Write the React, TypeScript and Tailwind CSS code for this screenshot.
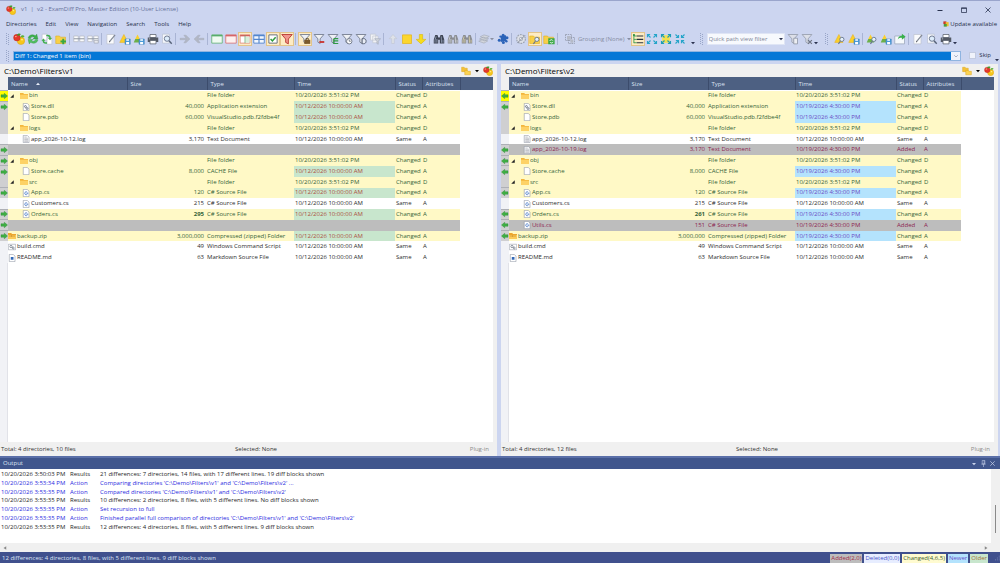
import React from 'react';
import clsx from 'clsx';

type Side = 'left' | 'right';
type Kind = 'changed' | 'same' | 'added' | 'missing';
type IconName = 'folder' | 'dll' | 'file' | 'text' | 'cs' | 'zip' | 'cmd' | 'md';

interface Entry {
  name: string;
  icon: IconName;
  depth: number;
  size: string;
  type: string;
  time: string;
  kind: Kind;
  mark?: boolean;
  current?: boolean;
  stale?: boolean;
  bold?: boolean;
}

const FOLDER_TIME = '10/20/2026 3:51:02 PM';
const OLD_TIME = '10/12/2026 10:00:00 AM';
const NEW_TIME = '10/19/2026 4:30:00 PM';

const missing: Entry = { name: '', icon: 'file', depth: 0, size: '', type: '', time: '', kind: 'missing', mark: true };

const folder = (name: string, mark = false, current = false): Entry => ({
  name, icon: 'folder', depth: 1, size: '', type: 'File folder', time: FOLDER_TIME, kind: 'changed', mark, current,
});

function buildEntries(side: Side): Entry[] {
  const left = side === 'left';
  const time = left ? OLD_TIME : NEW_TIME;
  return [
    folder('bin', true, true),
    { name: 'Store.dll', icon: 'dll', depth: 2, size: '40,000', type: 'Application extension', time, kind: 'changed', stale: true, mark: true },
    { name: 'Store.pdb', icon: 'file', depth: 2, size: '60,000', type: 'VisualStudio.pdb.f2fdbe4f', time, kind: 'changed', stale: true },
    folder('logs'),
    { name: 'app_2026-10-12.log', icon: 'text', depth: 2, size: '3,170', type: 'Text Document', time: OLD_TIME, kind: 'same' },
    left
      ? missing
      : { name: 'app_2026-10-19.log', icon: 'text', depth: 2, size: '3,170', type: 'Text Document', time: NEW_TIME, kind: 'added', mark: true },
    folder('obj', true),
    { name: 'Store.cache', icon: 'file', depth: 2, size: '8,000', type: 'CACHE File', time, kind: 'changed', stale: true, mark: true },
    folder('src'),
    { name: 'App.cs', icon: 'cs', depth: 2, size: '120', type: 'C# Source File', time, kind: 'changed', stale: true, mark: true },
    { name: 'Customers.cs', icon: 'cs', depth: 2, size: '215', type: 'C# Source File', time: OLD_TIME, kind: 'same' },
    { name: 'Orders.cs', icon: 'cs', depth: 2, size: left ? '295' : '261', type: 'C# Source File', time, kind: 'changed', stale: true, mark: true, bold: true },
    left
      ? missing
      : { name: 'Utils.cs', icon: 'cs', depth: 2, size: '151', type: 'C# Source File', time: NEW_TIME, kind: 'added', mark: true },
    { name: 'backup.zip', icon: 'zip', depth: 0, size: '3,000,000', type: 'Compressed (zipped) Folder', time, kind: 'changed', stale: true, mark: true },
    { name: 'build.cmd', icon: 'cmd', depth: 0, size: '49', type: 'Windows Command Script', time: OLD_TIME, kind: 'same' },
    { name: 'README.md', icon: 'md', depth: 0, size: '63', type: 'Markdown Source File', time: OLD_TIME, kind: 'same' },
  ];
}

const log = [
  { time: '10/20/2026 3:50:03 PM', kind: 'Results', text: '21 differences: 7 directories, 14 files, with 17 different lines. 19 diff blocks shown' },
  { time: '10/20/2026 3:53:34 PM', kind: 'Action', text: "Comparing directories 'C:\\Demo\\Filters\\v1' and 'C:\\Demo\\Filters\\v2' ..." },
  { time: '10/20/2026 3:53:35 PM', kind: 'Action', text: "Compared directories 'C:\\Demo\\Filters\\v1' and 'C:\\Demo\\Filters\\v2'" },
  { time: '10/20/2026 3:53:35 PM', kind: 'Results', text: '10 differences: 2 directories, 8 files, with 5 different lines. No diff blocks shown' },
  { time: '10/20/2026 3:53:35 PM', kind: 'Action', text: 'Set recursion to full' },
  { time: '10/20/2026 3:53:35 PM', kind: 'Action', text: "Finished parallel full comparison of directories 'C:\\Demo\\Filters\\v1' and 'C:\\Demo\\Filters\\v2'" },
  { time: '10/20/2026 3:53:35 PM', kind: 'Results', text: '12 differences: 4 directories, 8 files, with 5 different lines. 9 diff blocks shown' },
];

/* ---------- drawings ---------- */

function Svg({ children, className = 'h-3 w-3' }: { children: React.ReactNode; className?: string }) {
  return (
    <svg viewBox="0 0 16 16" fill="none" className={clsx('block shrink-0', className)} aria-hidden="true">
      {children}
    </svg>
  );
}

const logo = (
  <>
    <circle cx="10.600" cy="10.400" r="5" fill="#f6c71c" stroke="#dc9d0e" strokeWidth=".6" />
    <circle cx="5.200" cy="6.200" r="4.400" fill="#e5382a" stroke="#bb2817" strokeWidth=".6" />
    <path d="M5 3C6 .6 9 .2 10.400 1.400 9.400 3.600 7 4.200 5 3Z" fill="#3f9a2c" />
    <path d="M10 5c1.500-2.500 4-2.600 5.400-.6-1.400 2-3.800 2.200-5.400.6Z" fill="#59b336" />
    <ellipse cx="3.800" cy="4.800" rx="1.300" ry=".9" fill="#ffa999" />
    <ellipse cx="12" cy="9" rx="1.300" ry=".9" fill="#ffeb98" />
  </>
);

const triangle = <path d="M6.500 2 12 12.500H1Z" fill="#fbd02c" stroke="#e8b422" strokeWidth=".8" />;
const cone = (
  <>
    <path d="M6 2 9 8 3 8Z" fill="#fbd02c" />
    <path d="M3 8h6l2 4.500H1Z" fill="#6cb04a" />
  </>
);
const lens = (
  <>
    <circle cx="10.500" cy="8.500" r="2.800" fill="#e4f1fb" stroke="#68768f" strokeWidth="1.200" />
    <path d="m8.500 11-2.600 3.400" stroke="#68768f" strokeWidth="1.600" />
  </>
);
const disk = (
  <>
    <path d="M8 8h7v7H8Z" fill="#4b9bd8" stroke="#3a7cb8" strokeWidth=".7" />
    <path d="M9.700 8.300h3.600v2H9.700ZM9.500 12h4v3h-4Z" fill="#fff" />
  </>
);
const funnel = <path d="M1.500 2h13L9.500 7.800V14l-3-1.800V7.800Z" fill="#eef0f4" stroke="#6c7587" strokeWidth="1.100" />;
const grayFunnel = <path d="M1.500 2h13L9.500 7.800V14l-3-1.800V7.800Z" fill="#dcdfe8" stroke="#949bab" strokeWidth="1.100" />;
const yellowFolder = <path d="M1 4h5l1.300 1.600H14V14H1Z" fill="#f8d047" stroke="#deae25" strokeWidth=".8" />;
const printer = (
  <>
    <path d="M4 2h8v4H4Z" fill="#fff" stroke="#5a606c" />
    <path d="M1 6h14v6H1Z" fill="#535964" />
    <path d="M4 10h8v4.500H4Z" fill="#fff" stroke="#5a606c" />
    <path d="M2.500 7.800h1.700" stroke="#cfd4df" />
  </>
);
const preview = (
  <>
    <path d="M2 1.500h9v12H2Z" fill="#f5f7fb" stroke="#b5bccd" strokeWidth=".8" />
    <circle cx="8" cy="7.500" r="3.600" fill="#dcecfb" stroke="#66728a" strokeWidth="1.200" />
    <path d="m10.700 10.300 3.600 4" stroke="#566278" strokeWidth="1.900" />
  </>
);
const edit = (
  <>
    <path d="M2.500 2h9.500v12.500H2.500Z" fill="#fafbfd" stroke="#bcc1cc" strokeWidth=".9" />
    <path d="m6 11.500 7.500-9" stroke="#7f8693" strokeWidth="1.500" />
    <path d="m5.500 12.500.4-1.800 1.200 1Z" fill="#333" />
  </>
);
const binoc = (dark: string, light: string) => (
  <>
    <path d="M3 2.500h3l1 3v8.500H1V9ZM10 2.500h3l2 6.500v5H9V5.500Z" fill={dark} />
    <path d="M6.500 6h3v3h-3Z" fill={dark} />
    <path d="M4.200 4.500 2.700 9.500v3.500M11 4.500l.4 8.500M5.200 8v5M13.400 9v4" stroke={light} strokeWidth=".9" />
  </>
);
const expandArrows = (color: string) => (
  <g stroke={color} strokeWidth="1.500">
    <path d="M6 6 2 2m0 3.500V2h3.500M10 6l4-4m-3.500 0H14v3.500M6 10l-4 4m0-3.500V14h3.500M10 10l4 4m-3.500 0H14v-3.500" />
  </g>
);
const gridWindow = (edge: string, fill: string) => (
  <>
    <path d="M1 2.500h14v11H1Z" fill={fill} stroke={edge} />
    <path d="M1 3.500h14" stroke={edge} strokeWidth="2" />
  </>
);
const splitRows = (
  <>
    <path d="M1 4h6v7.500H1ZM9 4h6v7.500H9Z" fill="#fbfcfd" stroke="#b0b5be" strokeWidth=".9" />
    <path d="M1 7.700h14" stroke="#8d939f" strokeWidth="1.300" />
  </>
);

const glyphs: Record<string, React.ReactNode> = {
  logo,
  refresh: (
    <>
      <path d="M1.500 7c.5-4 5.500-6 9.500-3.400L13 1.500l1.500 6.500H8l2-2C8 4.500 5 5 4.500 7.500Z" fill="#3db04b" stroke="#278f37" strokeWidth=".5" />
      <path d="M14.500 9c-.5 4-5.500 6-9.500 3.400L3 14.500 1.500 8.500H8L6 10.500c2 1.300 5 .6 5.500-1.800Z" fill="#52c160" stroke="#278f37" strokeWidth=".5" />
    </>
  ),
  swapDocs: (
    <>
      <path d="M1.500 1.500H8v8H1.500ZM8 6h6.500v9H8Z" fill="#fff" stroke="#b4bac8" strokeWidth=".8" />
      <path d="M7 2.500c4-.8 6 1 6 4h1.800L12 9.500 9.200 6.500H11C11 4.800 9.500 4 7 4.300ZM8 14.200c-4 .5-5.800-1-5.800-4H.6l2.600-3 2.700 3H4.200c0 1.700 1.300 2.300 3.800 2Z" fill="#3fae4c" />
    </>
  ),
  folderPlus: (
    <>
      {yellowFolder}
      <path d="M11 7.500v7.500M7.300 11.200h7.400" stroke="#38a744" strokeWidth="2.600" />
    </>
  ),
  nextDiff: splitRows,
  prevDiff: (
    <>
      {splitRows}
      <path d="M9.500 10h5.500v3.500H9.500Z" fill="#e8eaee" stroke="#9aa0ab" strokeWidth=".8" />
    </>
  ),
  edit,
  saveDiff: <>{triangle}{disk}</>,
  saveCone: <>{cone}{disk}</>,
  print: printer,
  preview,
  right: <path d="M1.500 7h8L6.500 3h2.800L14.500 8l-5.200 5H6.500l3-4h-8Z" fill="#b3b8c6" stroke="#a1a7b6" strokeWidth=".6" />,
  left: <path d="M14.500 7h-8l3-4H6.700L1.500 8l5.200 5h2.800l-3-4h8Z" fill="#b3b8c6" stroke="#a1a7b6" strokeWidth=".6" />,
  winGreen: gridWindow('#57ad6b', '#f0fbf2'),
  winRed: gridWindow('#d66568', '#fdf0ef'),
  winSplit: (
    <>
      <path d="M1.500 2.500h13v11h-13Z" fill="#fff" stroke="#d97a72" />
      <path d="M1.500 3.500h13" stroke="#d3625b" strokeWidth="2" />
      <path d="M8.500 5h5.500v8H8.500Z" fill="#d7efda" />
      <path d="M8 3v10.500" stroke="#67a873" />
    </>
  ),
  winBlue: (
    <>
      <path d="M1 2.500h14v11H1Z" fill="#f2f7ff" stroke="#5386cd" strokeWidth="1.200" />
      <path d="M1 3.500h14M8 3v10.500M1 8.500h14" stroke="#5386cd" strokeWidth="1.500" />
    </>
  ),
  check: (
    <>
      <path d="M2.500 2.500h11v11h-11Z" fill="#fff" stroke="#5c6577" strokeWidth="1.200" />
      <path d="m4.800 8 2.400 2.600 4.300-5" stroke="#2d9c3d" strokeWidth="2" />
    </>
  ),
  filterRed: <path d="M1 2h14L9.800 8v6.500l-3.600-2V8Z" fill="#f0968d" stroke="#b83a33" strokeWidth="1.200" />,
  filterCase: (
    <>
      {funnel}
      <path d="M7 9h8v5.500H7Z" fill="#7a5a2c" />
      <path d="M9.300 9V7.500h3.400V9" stroke="#4f3817" />
    </>
  ),
  filterMinus: (
    <>
      {funnel}
      <path d="M8.500 12h6.500" stroke="#c9302c" strokeWidth="2.400" />
    </>
  ),
  filterTree: (
    <>
      {funnel}
      <path d="M9 7.500V14h6M9 10.500h6M9 7.500h6" stroke="#2f9a44" strokeWidth="1.500" />
    </>
  ),
  filterClock: (
    <>
      {funnel}
      <circle cx="11" cy="11" r="3.600" fill="#fff" stroke="#535c6e" />
      <path d="M11 8.800V11h2" stroke="#535c6e" />
    </>
  ),
  filterD: (
    <>
      {funnel}
      <path d="M9.500 7.500v6.800h2c2.300 0 3.300-1.400 3.300-3.400s-1-3.400-3.300-3.400Z" fill="#e9edf5" stroke="#505a6d" strokeWidth="1.200" />
    </>
  ),
  filterDocs: (
    <>
      <path d="M2 1.500h7v8H2ZM5 4h7v9H5Z" fill="#f1f2f5" stroke="#c0c4ce" strokeWidth=".8" />
      <path d="M7.500 7.500h8L12.300 11v4l-1.800-1v-3Z" fill="#cdd1da" stroke="#9ea5b4" strokeWidth=".7" />
    </>
  ),
  up: <path d="M8 2 3 7.500h3.300V14h3.400V7.500H13Z" fill="#dfe2e8" stroke="#bcc2cd" strokeWidth=".7" />,
  square: <path d="M2 2.500h12v11.500H2Z" fill="#fbd62f" stroke="#e3b112" strokeWidth=".9" />,
  down: <path d="M8 14.500 1.500 8.500H5.800V2h4.400v6.500h4.300Z" fill="#f7dc1c" stroke="#d6b910" strokeWidth=".8" />,
  find: binoc('#3c4352', '#a7b4cc'),
  findPrev: binoc('#8a8d92', '#e6e8ec'),
  findNext: binoc('#8a8d92', '#f0e3a8'),
  puzzle: (
    <g fill="#2b63b8">
      <path d="m5 4 7-1 .500 7.500L5 12Z" />
      <circle cx="8.200" cy="3" r="2" />
      <circle cx="13.300" cy="6.200" r="2" />
      <circle cx="3" cy="9.500" r="2" />
      <circle cx="8.500" cy="12.800" r="2" />
      <circle cx="12.500" cy="11" r="1.600" />
      <circle cx="4.500" cy="4.700" r="1.500" />
    </g>
  ),
  blocked: (
    <>
      <circle cx="8" cy="8" r="5.800" fill="#dfe2e9" stroke="#9ca3b0" strokeWidth="1.500" strokeDasharray="2.400 1.200" />
      <circle cx="8" cy="8" r="2.300" fill="#eef0f5" stroke="#9ca3b0" />
      <path d="M3 13.500 13.500 3" stroke="#878e9d" strokeWidth="1.300" />
    </>
  ),
  folderFind: (
    <>
      {yellowFolder}
      {lens}
    </>
  ),
  folderSync: (
    <>
      {yellowFolder}
      <path d="M7 7h8.500v8H7Z" fill="#38a744" />
      <path d="M9 10.500c.5-2 3.500-2 4.200-.3M13.500 11.800c-.6 2-3.400 2-4.200.3" stroke="#fff" strokeWidth="1.200" />
    </>
  ),
  tree: (
    <>
      <path d="M2.500 2v11.500M2.500 4h4M2.500 8.500h4M2.500 13h4" stroke="#2d9447" strokeWidth="1.100" />
      <path d="M6.500 4H15M6.500 8.500H15M6.500 13H15" stroke="#27313f" strokeWidth="1.500" />
      <path d="M1.300 1.500h2.500V4H1.300Z" fill="#2d9447" />
    </>
  ),
  expand: expandArrows('#26a5c9'),
  expandYellow: (
    <>
      <path d="M3 3h10v10H3Z" fill="#f4e04a" />
      {expandArrows('#1d9db8')}
    </>
  ),
  collapse: (
    <g stroke="#26a5c9" strokeWidth="1.500">
      <path d="m2 2 4 4m0-3.500V6H2.500M14 2l-4 4m3.500 0H10V2.500M2 14l4-4m-3.500 0H6v3.500M14 14l-4-4m0 3.500V10h3.500" />
    </g>
  ),
  filterGrayDoc: (
    <>
      {grayFunnel}
      <path d="M9 7h5v7.500H9Z" fill="#eceef2" stroke="#8b92a1" />
    </>
  ),
  filterGrayX: (
    <>
      {grayFunnel}
      <path d="m9.500 9.500 5 5m0-5-5 5" stroke="#6d7381" strokeWidth="1.500" />
    </>
  ),
  triFind: <>{triangle}{lens}</>,
  coneFind: <>{cone}{lens}</>,
  windowGo: (
    <>
      <path d="M1 4h13v10.500H1Z" fill="#f6f9fc" stroke="#9aa6ba" />
      <path d="M5 8.500c.5-4 3-5 5.500-5V1L15.500 5l-5 4V6.500C8.500 6.400 6.500 7 5 8.500Z" fill="#37b04a" />
    </>
  ),
};

function FileGlyph({ name }: { name: IconName }) {
  switch (name) {
    case 'folder':
      return (
        <Svg className="h-2 w-2">
          <path d="M0 2h6.500l1.500 2h8v10H0Z" fill="#f3b63c" />
          <path d="M0 5.500h16V14H0Z" fill="#fdd266" />
        </Svg>
      );
    case 'zip':
      return (
        <Svg className="h-2 w-2">
          <path d="M0 2h6.500l1.500 2h8v10H0Z" fill="#eda52c" />
          <path d="M0 6h16v8H0Z" fill="#fbca58" />
          <path d="M3 8h10" stroke="#b87716" strokeWidth="2" strokeDasharray="2 1" />
        </Svg>
      );
    case 'cmd':
      return (
        <Svg className="h-2 w-2">
          <path d="M.7 2.500h14.600v11H.7Z" fill="#fff" stroke="#868d9a" />
          <circle cx="6" cy="7" r="2.300" stroke="#5d6675" strokeWidth="1.300" />
          <circle cx="10.500" cy="10" r="1.900" stroke="#5d6675" strokeWidth="1.300" />
        </Svg>
      );
    default:
      return (
        <Svg className="h-2 w-2">
          <path d="M2.500.8h8l3.500 3.500v11H2.500Z" fill="#fff" stroke="#9097a5" strokeWidth="1.200" />
          {name === 'dll' && (
            <g stroke="#566073" strokeWidth="1.500">
              <circle cx="6.800" cy="7" r="1.900" />
              <circle cx="10" cy="11" r="1.900" />
            </g>
          )}
          {name === 'text' && <path d="M4.500 4h5M4.500 6.500h7.500M4.500 9h7.500M4.500 11.500h7.500M4.500 13.500h7.500" stroke="#a5a9b2" strokeWidth="1.300" />}
          {name === 'cs' && <path d="M10.500 6.500c-1.500-1.700-5-1-5 2s3.500 3.700 5 2M9 8.500h3.500" stroke="#3a6fc4" strokeWidth="1.600" />}
          {name === 'md' && <path d="M5.500 6h5.500v5.500H5.500Z" fill="#3268b8" />}
        </Svg>
      );
  }
}

/* ---------- toolbar ---------- */

function Caret({ className = 'text-[#2b3350]' }: { className?: string }) {
  return (
    <Svg className={clsx('h-1 w-1', className)}>
      <path d="M0 4h16l-8 9Z" fill="currentColor" />
    </Svg>
  );
}

function Grip() {
  return (
    <svg className="h-3 w-1 shrink-0" viewBox="0 0 4 12" aria-hidden="true">
      <path d="M.5 0v12M2.500 1v12" stroke="#98a5c8" strokeDasharray="1 1" />
    </svg>
  );
}

function Separator() {
  return <span className="mx-px h-3 w-0.5 shrink-0 border-l border-[#a9b4d4]" />;
}

function Overflow() {
  return (
    <button aria-label="Toolbar options" className="flex h-[14px] w-1 shrink-0 items-end pb-px">
      <Caret />
    </button>
  );
}

function ToolButton({ icon, active, label }: { icon: string; active?: boolean; label?: string }) {
  return (
    <button
      aria-label={label ?? icon}
      className={clsx(
        'flex h-[14px] w-[14px] shrink-0 items-center justify-center',
        active && 'bg-[#fdecc4] outline outline-1 -outline-offset-1 outline-[#e2c48a]'
      )}
    >
      <Svg className="h-3 w-3">{glyphs[icon]}</Svg>
    </button>
  );
}

function ToolGroup({ icons, active = [] }: { icons: string[]; active?: string[] }) {
  return (
    <div className="flex shrink-0">
      {icons.map((icon) => (
        <ToolButton key={icon} icon={icon} active={active.includes(icon)} />
      ))}
    </div>
  );
}

function Toolbar() {
  return (
    <div className="flex h-[18px] items-center pl-[6px]">
      <Grip />
      <span className="w-0.5 shrink-0" />
      <ToolGroup icons={['logo', 'refresh', 'swapDocs', 'folderPlus']} />
      <Separator />
      <ToolGroup icons={['nextDiff', 'prevDiff']} />
      <Separator />
      <ToolGroup icons={['edit', 'saveDiff', 'saveCone', 'print', 'preview']} />
      <Separator />
      <ToolGroup icons={['right', 'left']} />
      <Separator />
      <ToolGroup
        icons={['winGreen', 'winRed', 'winSplit', 'winBlue', 'check', 'filterRed']}
        active={['winSplit', 'check', 'filterRed']}
      />
      <Separator />
      <ToolGroup
        icons={['filterCase', 'filterMinus', 'filterTree', 'filterClock', 'filterD', 'filterDocs']}
        active={['filterCase']}
      />
      <Separator />
      <ToolGroup icons={['up', 'square', 'down']} />
      <Separator />
      <ToolGroup icons={['find', 'findPrev', 'findNext']} />
      <Separator />
      <button aria-label="Snapshots" className="flex h-[14px] w-[18px] shrink-0 items-center">
        <Svg className="h-3 w-3">
          <path d="m1 11 5-2.500 7 2-5 3ZM2 8l5-2.500 7 2-5 3ZM3 5l5-2.500 7 2-5 3Z" fill="#d3d6dd" stroke="#a0a6b2" strokeWidth=".8" />
        </Svg>
        <Caret className="text-[#8a90a2]" />
      </button>
      <ToolButton icon="puzzle" label="Plug-ins" />
      <Separator />
      <ToolGroup icons={['blocked', 'folderFind', 'folderSync']} active={['folderFind']} />
      <Separator />
      <button className="flex h-[14px] shrink-0 items-center gap-0.5 pl-1 text-[#868da3]">
        <Svg className="h-3 w-3">
          <path d="M2 2h8v8H2ZM6 6h8v8H6Z" stroke="#8d94a5" strokeDasharray="2 1" />
          <path d="M4 4h5v5H4ZM8.500 8.500h4V13h-4Z" fill="#b5bac7" />
        </Svg>
        <span>Grouping (None)</span>
        <Caret className="text-[#868da3]" />
      </button>
      <ToolGroup icons={['tree', 'expand', 'expandYellow', 'collapse']} active={['tree']} />
      <span className="w-1 shrink-0" />
      <Overflow />
      <span className="w-[5px] shrink-0" />
      <Grip />
      <label className="relative ml-[3px] flex shrink-0">
        <input
          aria-label="Quick path view filter"
          placeholder="Quick path view filter"
          className="h-3 w-[78px] bg-[#f7f9fd] pl-0.5 outline outline-1 -outline-offset-1 outline-[#dfe5f5] placeholder:text-[#7d8496]"
        />
        <span className="absolute right-0.5 top-1">
          <Caret />
        </span>
      </label>
      <span className="w-px shrink-0" />
      <ToolGroup icons={['filterGrayDoc', 'filterGrayX']} />
      <Overflow />
      <span className="w-[7px] shrink-0" />
      <Grip />
      <span className="w-1 shrink-0" />
      <ToolGroup icons={['triFind', 'saveDiff']} />
      <Separator />
      <ToolGroup icons={['coneFind', 'saveCone', 'windowGo']} />
      <Separator />
      <ToolGroup icons={['edit', 'preview', 'print']} />
      <Overflow />
    </div>
  );
}

/* ---------- directory pane ---------- */

function DiffArrow({ side }: { side: Side }) {
  return (
    <Svg className="h-2 w-2">
      <path
        d={side === 'left' ? 'M15 8 8.500 2.500v3H2v5h6.500v3Z' : 'M1 8l6.500-5.500v3H14v5H7.500v3Z'}
        fill="#3fb043"
        stroke="#25862f"
        strokeWidth=".7"
      />
    </Svg>
  );
}

const rowStyle: Record<Kind, string> = {
  changed: 'bg-[#fff9c6] text-[#356339]',
  same: 'bg-white text-[#2c2c2c]',
  added: 'bg-[#bdbdbd] text-[#8c1f50]',
  missing: 'bg-[#bdbdbd]',
};

function EntryRow({ entry, side }: { entry: Entry; side: Side }) {
  const isFolder = entry.icon === 'folder';
  return (
    <tr>
      <td
        className={clsx(
          entry.current ? 'bg-[#ffff00]' : entry.kind === 'same' ? 'bg-[#f1f2f6]' : 'bg-[#cfcfd1]',
          entry.mark && 'border-t border-[#aeb0b6]'
        )}
      >
        {entry.mark && <DiffArrow side={side} />}
      </td>
      <td className={rowStyle[entry.kind]}>
        {entry.name && (
          <div className={clsx('flex items-center gap-px', entry.depth === 2 && 'pl-[14px]', entry.depth === 1 && 'pl-0.5')}>
            {isFolder && (
              <Svg className="mr-[5px] h-1 w-1">
                <path d="M15 1v14H1Z" fill="#222" />
              </Svg>
            )}
            <FileGlyph name={entry.icon} />
            <span>{entry.name}</span>
          </div>
        )}
      </td>
      <td className={clsx(rowStyle[entry.kind], 'pr-[3px] text-right', entry.bold && 'font-bold text-[#111]')}>{entry.size}</td>
      <td className={rowStyle[entry.kind]}>{entry.type}</td>
      <td
        className={clsx(
          'pl-px',
          !entry.stale && rowStyle[entry.kind],
          entry.stale && side === 'left' && 'bg-[#c8e6cd] text-[#ab5040]',
          entry.stale && side === 'right' && 'bg-[#b4e3fd] text-[#6b4bc4]'
        )}
      >
        {entry.time}
      </td>
      <td className={clsx(rowStyle[entry.kind], 'pl-px')}>
        {entry.kind === 'changed' ? 'Changed' : entry.kind === 'same' ? 'Same' : entry.kind === 'added' ? 'Added' : ''}
      </td>
      <td className={clsx(rowStyle[entry.kind], 'pl-px')}>{entry.kind === 'missing' ? '' : isFolder ? 'D' : 'A'}</td>
      <td />
    </tr>
  );
}

function Columns() {
  return (
    <colgroup>
      <col className="w-2" />
      <col className="w-[119px]" />
      <col className="w-[80px]" />
      <col className="w-[87px]" />
      <col className="w-[101px]" />
      <col className="w-[27px]" />
      <col className="w-[38px]" />
      <col />
    </colgroup>
  );
}

function Pane({ side, path, total }: { side: Side; path: string; total: string }) {
  const headings = ['Name', 'Size', 'Type', 'Time', 'Status', 'Attributes'];
  return (
    <section className="flex min-w-0 flex-col bg-[#f0f0f0]">
      <header className="flex h-[13px] items-center justify-between pl-1 pr-1">
        <h2 className="text-[8px] text-black">{path}</h2>
        <div className="flex items-center gap-1">
          <button aria-label="Open folder">
            <Svg className="h-[10px] w-[10px]">
              <path d="M1 2h4l1 1.500h4V9H1Z" fill="#f5c237" stroke="#d99f13" strokeWidth=".7" />
              <path d="M6 7h4l1 1.500h4V14H6Z" fill="#fad253" stroke="#d99f13" strokeWidth=".7" />
            </Svg>
          </button>
          <button aria-label="Recent folders">
            <Caret className="text-black" />
          </button>
          <button aria-label="Compare">
            <Svg className="h-[10px] w-[10px]">{logo}</Svg>
          </button>
        </div>
      </header>
      <div className="flex flex-1 pr-1">
        <div className="flex flex-1 flex-col bg-white">
          <table className="w-full table-fixed border-collapse text-left leading-[10px] whitespace-nowrap">
            <Columns />
            <thead>
              <tr className="h-[13px] bg-[#4d6082] text-[#dbe2f2]">
                <th className="bg-[#f0f0f0]" />
                {headings.map((h) => (
                  <th key={h} scope="col" className="border-r border-[#3c4c6c] pl-[3px] font-normal">
                    <span className="flex items-center gap-2">
                      {h}
                      {h === 'Name' && side === 'left' && (
                        <Svg className="h-1 w-1">
                          <path d="M0 12h16L8 3Z" fill="#e9eefa" />
                        </Svg>
                      )}
                    </span>
                  </th>
                ))}
                <th />
              </tr>
            </thead>
          </table>
          <table className="h-[173px] w-full table-fixed border-collapse text-left leading-[9px] whitespace-nowrap">
            <Columns />
            <tbody>
              {buildEntries(side).map((entry, i) => (
                <EntryRow key={i} entry={entry} side={side} />
              ))}
            </tbody>
          </table>
          <div className="w-2 flex-1 border-r border-[#e1e2e8] bg-[#f1f2f6]" />
        </div>
      </div>
      <footer className="grid h-[14px] grid-cols-[1fr_auto_1fr] items-center px-px pr-2 pt-px text-[#333]">
        <span>{total}</span>
        <span className="pl-[22px]">Selected: None</span>
        <span className="text-right text-[#8b8b8b]">Plug-in</span>
      </footer>
    </section>
  );
}

/* ---------- page ---------- */

const badges = [
  { label: 'Added(2,0)', style: 'bg-[#bdbdbd] text-[#a02c45]' },
  { label: 'Deleted(0,0)', style: 'bg-[#e7edff] text-[#4a55c9]' },
  { label: 'Changed(4,6,5)', style: 'bg-[#fffbd0] text-[#3b5f31]' },
  { label: 'Newer', style: 'bg-[#b4e3fd] text-[#6a52c8]' },
  { label: 'Older', style: 'bg-[#c8e6cd] text-[#a3703a]' },
];

export default function App() {
  return (
    <div className="flex h-screen flex-col overflow-hidden border-t border-[#9aa5cc] bg-[#ccd5f0] font-['Open_Sans','Noto_Sans',sans-serif] text-[6px] leading-[9px] text-[#26304a]">
      <header className="flex h-[17px] items-center justify-between pl-[6px] pr-2">
        <div className="flex items-center gap-[5px] text-[#66719a]">
          <Svg className="h-[10px] w-[10px]">{logo}</Svg>
          <h1 className="whitespace-pre">v1  |  v2 - ExamDiff Pro, Master Edition (10-User License)</h1>
        </div>
        <div className="flex gap-4">
          <button aria-label="Minimize">
            <Svg className="h-2 w-2"><path d="M3 9h10" stroke="#28324f" strokeWidth="2" /></Svg>
          </button>
          <button aria-label="Maximize">
            <Svg className="h-2 w-2"><path d="M3 3.500h10v9.500H3ZM3 5h10" stroke="#28324f" strokeWidth="1.500" /></Svg>
          </button>
          <button aria-label="Close">
            <Svg className="h-2 w-2"><path d="m3 3 10 10m0-10L3 13" stroke="#28324f" strokeWidth="1.600" /></Svg>
          </button>
        </div>
      </header>

      <div className="flex h-3 items-center justify-between pl-[6px] pr-[3px]">
        <nav className="flex gap-[9px]">
          {['Directories', 'Edit', 'View', 'Navigation', 'Search', 'Tools', 'Help'].map((item) => (
            <button key={item}>{item}</button>
          ))}
        </nav>
        <a href="#update" className="flex items-center gap-px">
          <Svg className="h-[6px] w-[6px]">
            <path d="M1 1h8v7H1Z" fill="#c8372b" />
            <path d="M7 3h8v11H7Z" fill="#eebf2e" />
            <path d="M2 8h8v7H2Z" fill="#4c9c3c" />
          </Svg>
          Update available
        </a>
      </div>

      <Toolbar />

      <div className="flex h-[14px] items-center pl-[6px] pr-px pt-px">
        <Grip />
        <label className="relative ml-[3px] flex flex-1">
          <select
            aria-label="Current difference"
            className="h-[10px] w-full appearance-none border border-[#8fb4e0] bg-[#0577d6] pl-px text-[6px] leading-[8px] text-white"
          >
            <option>Diff 1: Changed 1 item (bin)</option>
          </select>
          <span className="pointer-events-none absolute right-px top-px flex h-2 w-[9px] items-center justify-center bg-[#eef2fb]">
            <Svg className="h-1 w-1"><path d="m1 5 7 7 7-7" stroke="#7a859f" strokeWidth="2.500" /></Svg>
          </span>
        </label>
        <label className="ml-2 flex items-center gap-[3px]">
          <input type="checkbox" className="h-[7px] w-[7px] appearance-none border border-[#c3cbe0] bg-[#f0f3fb]" />
          Skip
        </label>
        <span className="w-1" />
        <Overflow />
      </div>

      <main className="grid flex-1 grid-cols-2 gap-1 pr-0.5 pt-0.5">
        <Pane side="left" path={'C:\\Demo\\Filters\\v1'} total="Total: 4 directories, 10 files" />
        <Pane side="right" path={'C:\\Demo\\Filters\\v2'} total="Total: 4 directories, 12 files" />
      </main>

      <section className="flex flex-col bg-white text-[#262626]">
        <header className="flex h-[13px] items-center justify-between border-t-2 border-[#5a6fa8] bg-[#40568d] pl-[3px] pr-1 text-[#dfe5f5]">
          <h2>Output</h2>
          <div className="flex items-center gap-0.5">
            <button aria-label="Window position" className="px-0.5"><Caret className="text-[#c7d1ea]" /></button>
            <button aria-label="Auto hide">
              <Svg className="h-[7px] w-[7px]"><path d="M5 1h6v8H5ZM3 9.500h10M8 9.500V16M9.500 1v8" stroke="#c7d1ea" strokeWidth="1.300" /></Svg>
            </button>
            <button aria-label="Close output">
              <Svg className="h-[7px] w-[7px]"><path d="m3 3 10 10m0-10L3 13" stroke="#c7d1ea" strokeWidth="1.600" /></Svg>
            </button>
          </div>
        </header>
        <div className="flex h-[74px] justify-between">
          <table className="mt-px h-[61px] border-collapse text-left leading-[8px] whitespace-nowrap">
            <tbody>
              {log.map((entry, i) => (
                <tr key={i} className={entry.kind === 'Action' ? 'text-[#2b2be0]' : undefined}>
                  <td className="w-[70px] pl-px">{entry.time}</td>
                  <td className="w-[30px]">{entry.kind}</td>
                  <td>{entry.text}</td>
                </tr>
              ))}
            </tbody>
          </table>
          <div className="flex w-[9px] justify-center bg-[#f0f0f0] pt-9">
            <span className="h-7 w-px bg-[#8a8a8a]" />
          </div>
        </div>
        <div className="flex h-[9px] items-center justify-between bg-[#f0f0f0] pl-[3px] pr-3">
          <Svg className="h-1 w-1"><path d="M13 1v14L2 8Z" fill="#8a8a8a" /></Svg>
          <Svg className="h-1 w-1"><path d="M3 1v14l11-7Z" fill="#8a8a8a" /></Svg>
        </div>
      </section>

      <footer className="flex h-[11px] items-center justify-between bg-[#40508d] pl-0.5 pt-px text-[#dfe5f5]">
        <span>12 differences: 4 directories, 8 files, with 5 different lines. 9 diff blocks shown</span>
        <div className="flex items-center gap-0.5">
          {badges.map((b) => (
            <span key={b.label} className={clsx('h-[9px] px-px', b.style)}>{b.label}</span>
          ))}
          <Svg className="ml-1 h-[6px] w-[6px]">
            <path d="M14 2v2M14 7v2M9 7v2M14 12v2M9 12v2M4 12v2" stroke="#8d9bc6" strokeWidth="2" />
          </Svg>
        </div>
      </footer>
    </div>
  );
}
